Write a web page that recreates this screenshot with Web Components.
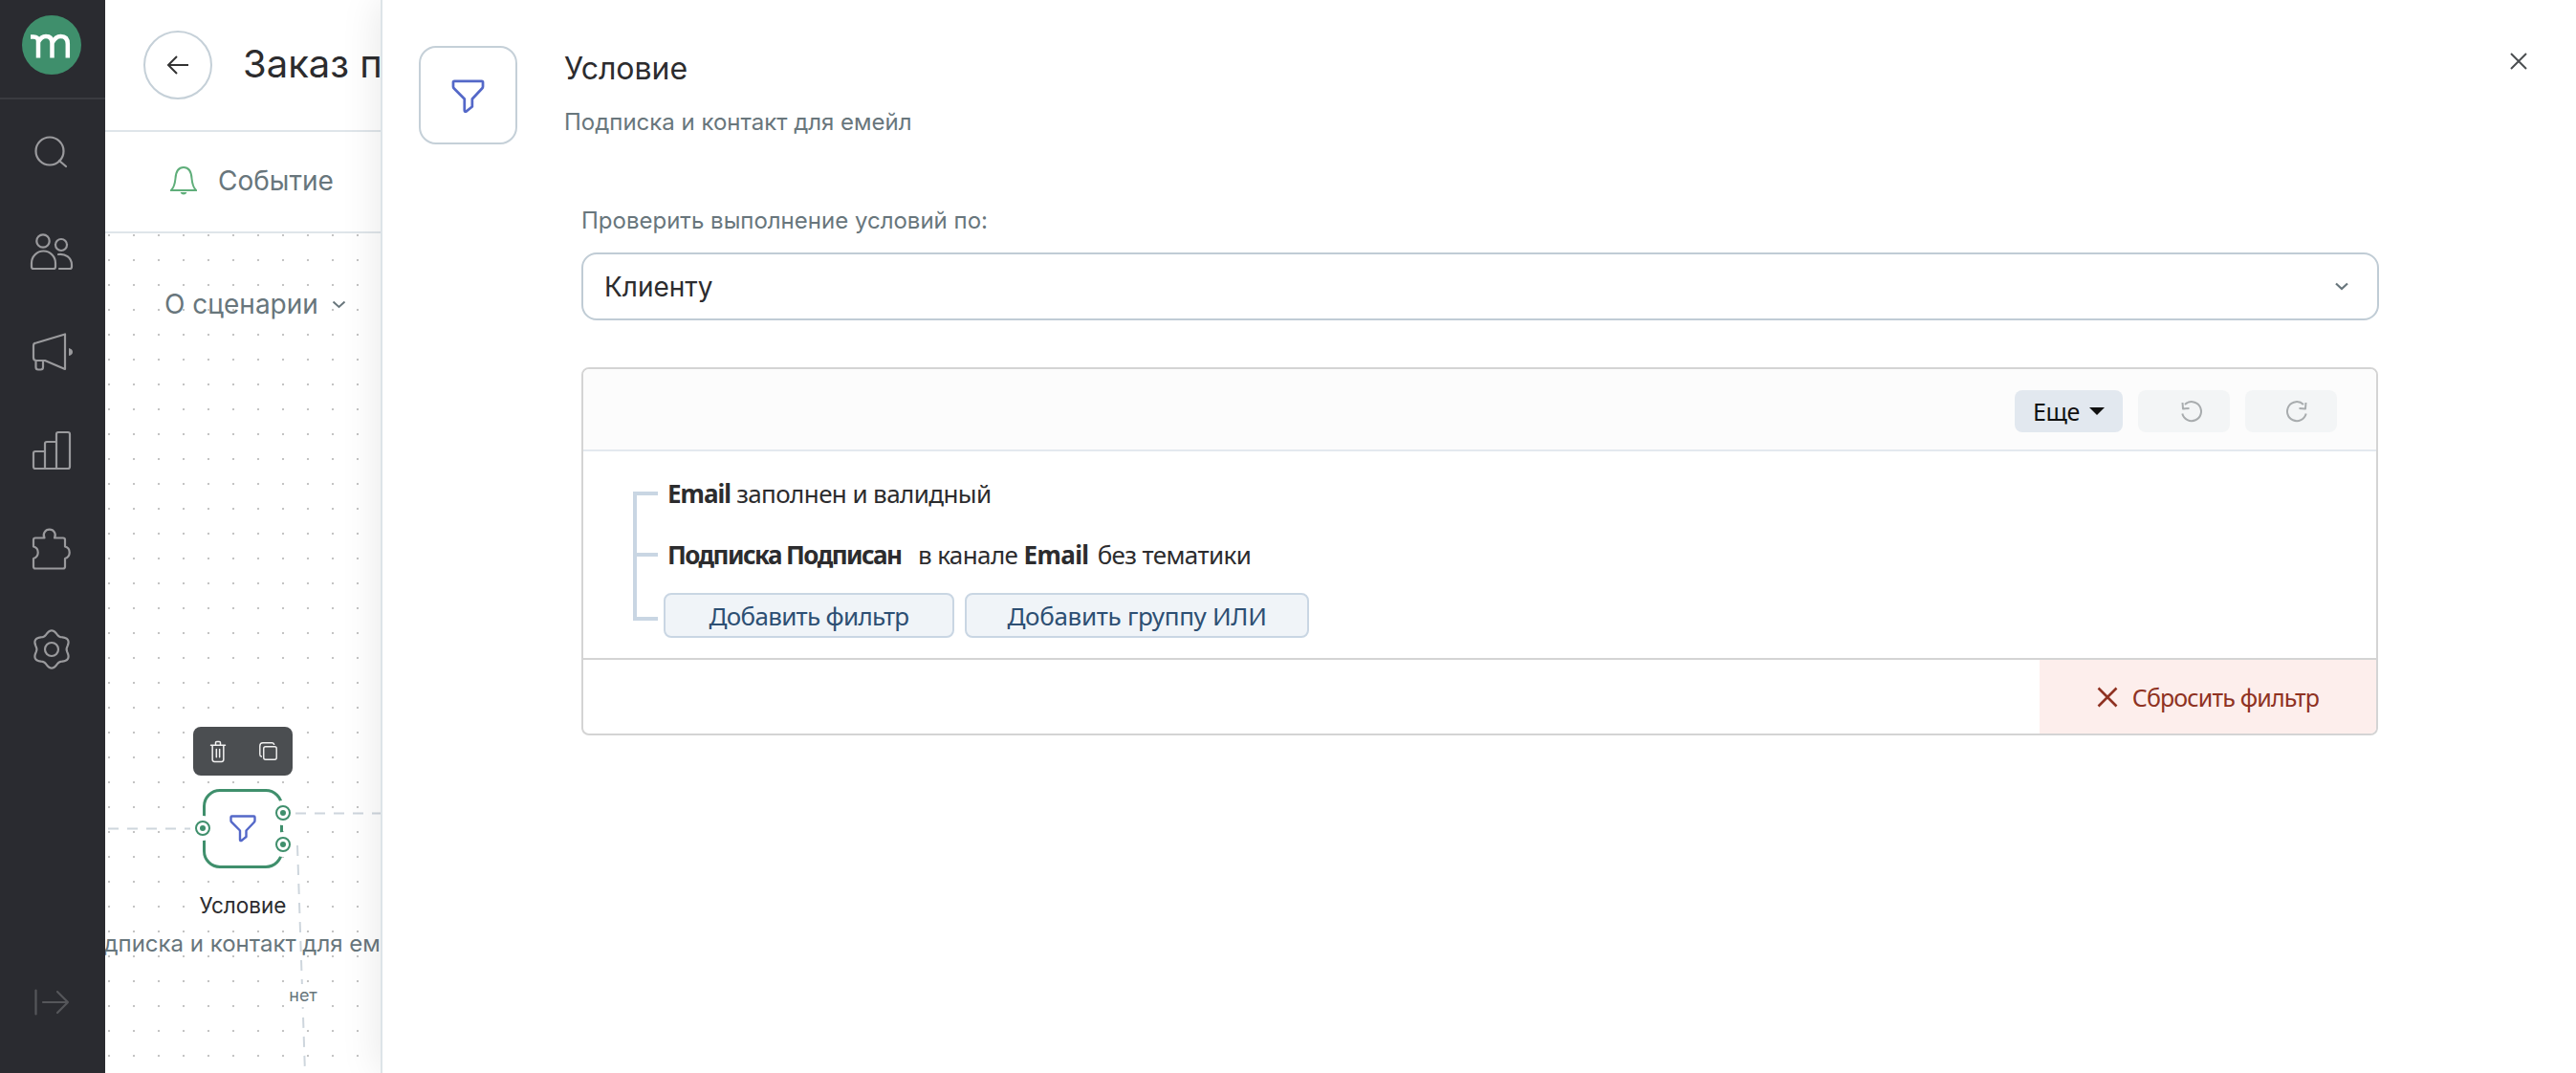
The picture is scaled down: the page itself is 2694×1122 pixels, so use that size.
<!DOCTYPE html>
<html lang="ru">
<head>
<meta charset="utf-8">
<title>Условие</title>
<style>
  html, body { margin: 0; height: 100%; overflow: hidden; background: #fff; }
  body { display: flex; font-family: Inter, "Noto Sans", sans-serif; }
</style>
</head>
<body>
<side-nav></side-nav>
<flow-view>
  <span slot="title">Заказ п</span>
  <span slot="tab">Событие</span>
  <span slot="about">О сценарии</span>
</flow-view>
<condition-panel>
  <span slot="title">Условие</span>
  <span slot="subtitle">Подписка и контакт для емейл</span>
  <span slot="label">Проверить выполнение условий по:</span>
  <select-box>Клиенту</select-box>
  <filter-builder>
    <div slot="first"><b style="letter-spacing:-1px">Email</b> заполнен и валидный</div>
    <div slot="second"><b style="letter-spacing:-1.550px">Подписка Подписан</b> &nbsp;<span style="margin-left:5px">в канале</span> <b style="letter-spacing:-.6px;margin-right:3px">Email</b> без тематики</div>
  </filter-builder>
</condition-panel>

<script>
const FUNNEL = `<path d="M2.5 1.5H25.5q1 0 1 1V6q0 1-.7 1.7L17.5 16.5V23L12.5 27q-1.5.5-1.5-1V16.5L2.2 7.7q-.7-.7-.7-1.7V2.5q0-1 1-1z"/>`;

function gearPath() {
  let d = '';
  for (let i = 0; i <= 120; i++) {
    const a = (i / 120) * Math.PI * 2;
    const r = 17.6 + 2 * Math.cos(6 * a);
    const x = 24 + r * Math.sin(a);
    const y = 24 - r * Math.cos(a);
    d += (i ? 'L' : 'M') + x.toFixed(2) + ' ' + y.toFixed(2);
  }
  return d + 'z';
}

class SideNav extends HTMLElement {
  connectedCallback() {
    this.attachShadow({ mode: 'open' }).innerHTML = `
      <style>
        :host { display: flex; flex-direction: column; flex: 0 0 110px; height: 100vh; background: #2a2b30; position: relative; z-index: 3; }
        .logo { border-bottom: 2px solid #3a3b40; height: 86px; padding: 16px 0 0 23px; }
        .items { padding-top: 3px; }
        .item { height: 104px; display: flex; align-items: center; justify-content: center; padding-right: 2px; }
        svg { display: block; fill: none; stroke: #9a9a9d; stroke-width: 2.2; stroke-linecap: round; stroke-linejoin: round; }
        .collapse { margin-top: auto; margin-bottom: 60px; display: flex; justify-content: center; }
        .collapse svg { stroke: #55565a; }
      </style>
      <div class="logo">
        <svg width="62" height="62" viewBox="0 0 62 62" style="stroke:none">
          <circle cx="31" cy="31" r="31" fill="#3f8f6c"/>
          <path d="M9 22.500h3q5 0 5 4.500V44.500M17 28q3-6 8-6 6.500 0 6.500 7V44.500M31.500 29q3.500-7 9-7 7.300 0 7.300 8V44.500" fill="none" stroke="#fff" stroke-width="4.500" stroke-linecap="butt" stroke-linejoin="miter"/>
        </svg>
      </div>
      <div class="items">
        <div class="item"><svg width="48" height="48"><circle cx="22" cy="23" r="14.500"/><path d="M32 33l7 6"/></svg></div>
        <div class="item"><svg width="48" height="48"><circle cx="15" cy="13" r="6.700"/><circle cx="34" cy="17" r="6"/><path d="M5 42h21q2 0 2-2v-4a12.500 12.500 0 0 0-25 0v4q0 2 2 2zM31 27c7-1 14 3 14 11v2q0 2-2 2H32"/></svg></div>
        <div class="item"><svg width="48" height="48"><path d="M8 15.500L38 6.500V43L17 34H8q-3 0-3-3V18.500q0-3 3-3zM7.500 34v7q0 2.500 2.500 2.500h2.500q2.500 0 2.500-2.500v-6"/><path d="M42 21q4 1 4 4t-4 4z" fill="#9a9a9d" stroke="none"/></svg></div>
        <div class="item"><svg width="48" height="48"><path d="M7 25h10v18H7q-2 0-2-2V27q0-2 2-2zM17 43V17q0-2 2-2h10v28zM29 15V7q0-2 2-2h10q2 0 2 2v34q0 2-2 2H29"/></svg></div>
        <div class="item"><svg width="48" height="48"><path d="M7 11.500h9.500a6 6 0 1 1 10.500 0H36q2 0 2 2v7a6.500 6.500 0 0 1 0 12.500v8.500q0 2-2 2H7q-2 0-2-2V33a6.500 6.500 0 0 0 0-12.500v-7q0-2 2-2z"/></svg></div>
        <div class="item"><svg width="48" height="48"><path d="${gearPath()}"/><circle cx="24" cy="24" r="7"/></svg></div>
      </div>
      <div class="collapse">
        <svg width="38" height="28"><path d="M1.500 1.500v25M9 14h26M24 3l11 11-11 11"/></svg>
      </div>`;
  }
}
customElements.define('side-nav', SideNav);

class FlowNode extends HTMLElement {
  connectedCallback() {
    this.attachShadow({ mode: 'open' }).innerHTML = `
      <style>
        :host { display: block; position: absolute; left: 0; top: 0; width: 290px; height: 878px; pointer-events: none; }
        .lines { position: absolute; left: 0; top: 0; }
        .tools { position: absolute; left: 92px; top: 516px; width: 104px; height: 51px; border-radius: 8px; background: #4b4e51; display: flex; align-items: center; justify-content: space-around; }
        .tools svg { fill: none; stroke: #f1f1f1; stroke-width: 1.800; stroke-linejoin: round; stroke-linecap: round; }
        .box { position: absolute; left: 102px; top: 581px; width: 84px; height: 83px; box-sizing: border-box; border: 3px solid #3f8f6c; border-radius: 18px; display: flex; align-items: center; justify-content: center; background: #fff; }
        .box svg { fill: none; stroke: #5468c8; stroke-width: 2.400; stroke-linejoin: round; }
        .port { position: absolute; width: 16px; height: 16px; box-sizing: border-box; border: 2px solid #3f8f6c; border-radius: 50%; background: #fff; box-shadow: 0 0 0 5px #fff; display: flex; align-items: center; justify-content: center; }
        .port::after { content: ""; width: 6px; height: 6px; border-radius: 50%; background: #3f8f6c; }
        .caption { position: absolute; left: 0; top: 688px; width: 288px; text-align: center; font-size: 22.500px; line-height: 30px; color: #2c2c2e; white-space: nowrap; }
        .sub { position: absolute; left: -52px; top: 728px; width: 400px; text-align: center; font-size: 24px; line-height: 30px; color: #68767c; white-space: nowrap; }
        .no { position: absolute; left: 190px; top: 785px; width: 34px; text-align: center; background: #fff; font-size: 18px; line-height: 24px; color: #68767c; }
      </style>
      <svg class="lines" width="290" height="878" fill="none" stroke="#ced6dd" stroke-width="2" stroke-dasharray="11 9">
        <path d="M3 622.500H90"/>
        <path d="M199 606.500H290"/>
        <path d="M201 640L209 878"/>
      </svg>
      <div class="tools">
        <svg width="20" height="24" viewBox="0 0 24 28"><path d="M3 6h18M9 6V3q0-1.500 1.500-1.500h3Q15 1.500 15 3v3M5 6v18q0 2.500 2.500 2.500h9Q19 26.500 19 24V6M10 11v10M14 11v10"/></svg>
        <svg width="19" height="19" viewBox="0 0 24 24"><path d="M3 19q-2-.5-2-3V5q0-4 4-4h12q2 0 2.800 2"/><rect x="6" y="6" width="17" height="17" rx="2.500"/></svg>
      </div>
      <div class="box"><svg width="28" height="29" viewBox="0 0 28 29">${FUNNEL}</svg></div>
      <div class="port" style="left:94px;top:614px"></div>
      <div class="port" style="left:178px;top:598px"></div>
      <div class="port" style="left:178px;top:631px"></div>
      <div class="caption"><slot name="caption"></slot></div>
      <div class="sub"><slot name="sub"></slot></div>
      <div class="no">нет</div>`;
  }
}
customElements.define('flow-node', FlowNode);

class FlowView extends HTMLElement {
  connectedCallback() {
    this.attachShadow({ mode: 'open' }).innerHTML = `
      <style>
        :host { display: flex; flex-direction: column; flex: 0 0 290px; width: 290px; height: 100vh; overflow: hidden; box-sizing: border-box; }
        .head { height: 136px; flex: none; border-bottom: 2px solid #dfe5ea; display: flex; align-items: center; gap: 32px; padding-left: 40px; white-space: nowrap; }
        .back { width: 72px; height: 72px; flex: none; box-sizing: border-box; border: 2px solid #c5d0d8; border-radius: 50%; display: flex; align-items: center; justify-content: center; }
        .title { font-size: 40px; color: #2c2c2e; margin-top: -4px; }
        .tabs { height: 102px; padding-bottom: 2px; flex: none; border-bottom: 2px solid #dfe5ea; display: flex; align-items: center; gap: 22px; padding-left: 68px; font-size: 28px; color: #68767c; white-space: nowrap; }
        .canvas { flex: 1; position: relative; padding: 57px 0 0 62px; background-image: radial-gradient(circle at 4px 2px, #c4c4c4 0, #c4c4c4 .8px, transparent 1.600px); background-size: 26px 26px; }
        .about { display: flex; align-items: center; gap: 14px; font-size: 28px; line-height: 34px; color: #68767c; white-space: nowrap; }
        svg { display: block; }
      </style>
      <div class="head">
        <div class="back"><svg width="24" height="20" fill="none" stroke="#333" stroke-width="2"><path d="M23 10H2M11 1l-9 9 9 9"/></svg></div>
        <div class="title"><slot name="title"></slot></div>
      </div>
      <div class="tabs">
        <svg width="28" height="30" fill="none" stroke="#5fae7a" stroke-width="2"><path d="M1 25c3-3 4-7 4.500-12.500C6 5 9 1 14 1s8 4 8.500 11.500C23 18 24 22 27 25z"/><path d="M10.500 27h7q-1 2.500-3.500 2.500T10.500 27z" fill="#5fae7a" stroke="none"/></svg>
        <slot name="tab"></slot>
      </div>
      <div class="canvas">
        <div class="about"><slot name="about"></slot>
          <svg width="15" height="9" fill="none" stroke="#68767c" stroke-width="2"><path d="M1.500 1.500L7.500 7l6-5.500"/></svg>
        </div>
        <flow-node>
          <span slot="caption">Условие</span>
          <span slot="sub">Подписка и контакт для емейл</span>
        </flow-node>
      </div>`;
  }
}
customElements.define('flow-view', FlowView);

class SelectBox extends HTMLElement {
  connectedCallback() {
    this.attachShadow({ mode: 'open' }).innerHTML = `
      <style>
        :host { display: flex; align-items: center; justify-content: space-between; height: 71px; box-sizing: border-box; border: 2.500px solid #c0ccd5; border-radius: 16px; padding: 0 30px 0 22px; font-size: 28px; color: #2c2c2e; background: #fff; }
      </style>
      <slot></slot>
      <svg width="14" height="9" fill="none" stroke="#68767c" stroke-width="2.200"><path d="M1 1.500L7 7l6-5.500"/></svg>`;
  }
}
customElements.define('select-box', SelectBox);

class FilterBuilder extends HTMLElement {
  connectedCallback() {
    this.attachShadow({ mode: 'open' }).innerHTML = `
      <style>
        :host { display: flex; flex-direction: column; height: 385px; margin: 49px 1px 0 0; box-sizing: border-box; border: 2px solid #d4d4d4; border-radius: 8px; overflow: hidden; font-family: "Noto Sans", sans-serif; }
        .top { flex: none; background: #fcfcfc; border-bottom: 2px solid #e3e9ef; display: flex; justify-content: flex-end; gap: 16px; padding: 22px 41px 0 0; height: 62px; }
        .btn { height: 44px; border-radius: 8px; display: flex; align-items: center; justify-content: center; box-sizing: border-box; }
        .more { width: 113px; background: #e2e8ef; color: #111; font-size: 25px; gap: 10px; letter-spacing: -.4px; }
        .more i { width: 0; height: 0; border-left: 8px solid transparent; border-right: 8px solid transparent; border-top: 8px solid #111; }
        .hist { width: 96px; background: #f3f5f6; padding-left: 14px; }
        .hist svg { fill: none; stroke: #a8acae; stroke-width: 2; stroke-linejoin: round; }
        .body { height: 216px; flex: none; box-sizing: border-box; padding: 12px 0 0 52px; display: grid; grid-template-columns: 36px 1fr; grid-template-rows: 64px 64px auto; }
        .tree { grid-row: 1 / 4; margin-top: 30px; stroke: #c9d6e3; stroke-width: 4; fill: none; }
        .row { display: flex; align-items: center; font-size: 26px; color: #2c2c2e; letter-spacing: -.6px; white-space: pre; }
        .adds { display: flex; gap: 12px; margin: 8px 0 0 -4px; }
        .add { height: 47px; box-sizing: border-box; border: 2px solid #c9d6e3; border-radius: 8px; background: #f0f4f8; color: #2d4f73; font-size: 26px; letter-spacing: -.7px; display: flex; align-items: center; justify-content: center; white-space: nowrap; }
        .bottom { flex: 1; border-top: 2px solid #d4d4d4; display: flex; justify-content: flex-end; }
        .reset { width: 352px; background: #fdeeec; color: #8f3222; font-size: 25px; letter-spacing: -.85px; display: flex; align-items: center; justify-content: center; gap: 15px; white-space: nowrap; }
      </style>
      <div class="top">
        <div class="btn more">Еще <i></i></div>
        <div class="btn hist"><svg width="24" height="24" viewBox="0 0 24 24"><path d="M6 5a10 10 0 1 1-2.700 9.500"/><path d="M3.500 3L4 9.500l6.500-.5"/></svg></div>
        <div class="btn hist"><svg width="24" height="24" viewBox="0 0 24 24"><path d="M18 5a10 10 0 1 0 2.700 9.500"/><path d="M20.500 3L20 9.500l-6.500-.5"/></svg></div>
      </div>
      <div class="body">
        <svg class="tree" width="26" height="135"><path d="M2 0V135M0 2H26M0 66H26M0 133H26"/></svg>
        <div class="row"><slot name="first"></slot></div>
        <div class="row" style="grid-column:2"><slot name="second"></slot></div>
        <div class="adds" style="grid-column:2">
          <div class="add" style="width:304px">Добавить фильтр</div>
          <div class="add" style="width:360px;letter-spacing:-.3px;margin-left:-1px">Добавить группу ИЛИ</div>
        </div>
      </div>
      <div class="bottom">
        <div class="reset">
          <svg width="22" height="22" fill="none" stroke="#8f3222" stroke-width="2.600"><path d="M1.500 1.500l19 19M20.500 1.500l-19 19"/></svg>
          Сбросить фильтр
        </div>
      </div>`;
  }
}
customElements.define('filter-builder', FilterBuilder);

class ConditionPanel extends HTMLElement {
  connectedCallback() {
    this.attachShadow({ mode: 'open' }).innerHTML = `
      <style>
        :host { display: block; flex: 1; height: 100vh; box-sizing: border-box; margin-left: -2px; border-left: 2px solid #dde4e8; background: #fff; box-shadow: 0 0 40px rgba(0,0,0,.1); position: relative; z-index: 2; }
        .close { position: absolute; left: 2225px; top: 55px; }
        .head { display: flex; gap: 49px; padding: 48px 0 0 38px; }
        .icon { width: 103px; height: 103px; flex: none; box-sizing: border-box; border: 2px solid #c5d0d8; border-radius: 18px; display: flex; align-items: center; justify-content: center; }
        .icon svg { fill: none; stroke: #5468c8; stroke-width: 2.200; stroke-linejoin: round; margin-top: 2px; }
        .title { margin-top: 4px; font-size: 32px; line-height: 40px; color: #2c2c2e; }
        .sub { margin-top: 20px; font-size: 24px; line-height: 32px; color: #68767c; }
        .form { margin: 64px 0 0 208px; width: 1880px; }
        .label { font-size: 24px; line-height: 32px; color: #68767c; margin: 0 0 17px 0; }
      </style>
      <svg class="close" width="18" height="18" fill="none" stroke="#4b4e51" stroke-width="2"><path d="M1 1l16 16M17 1L1 17"/></svg>
      <div class="head">
        <div class="icon"><svg width="35" height="36" viewBox="0 0 28 29">${FUNNEL}</svg></div>
        <div>
          <div class="title"><slot name="title"></slot></div>
          <div class="sub"><slot name="subtitle"></slot></div>
        </div>
      </div>
      <div class="form">
        <div class="label"><slot name="label"></slot></div>
        <slot></slot>
      </div>`;
  }
}
customElements.define('condition-panel', ConditionPanel);
</script>
</body>
</html>
